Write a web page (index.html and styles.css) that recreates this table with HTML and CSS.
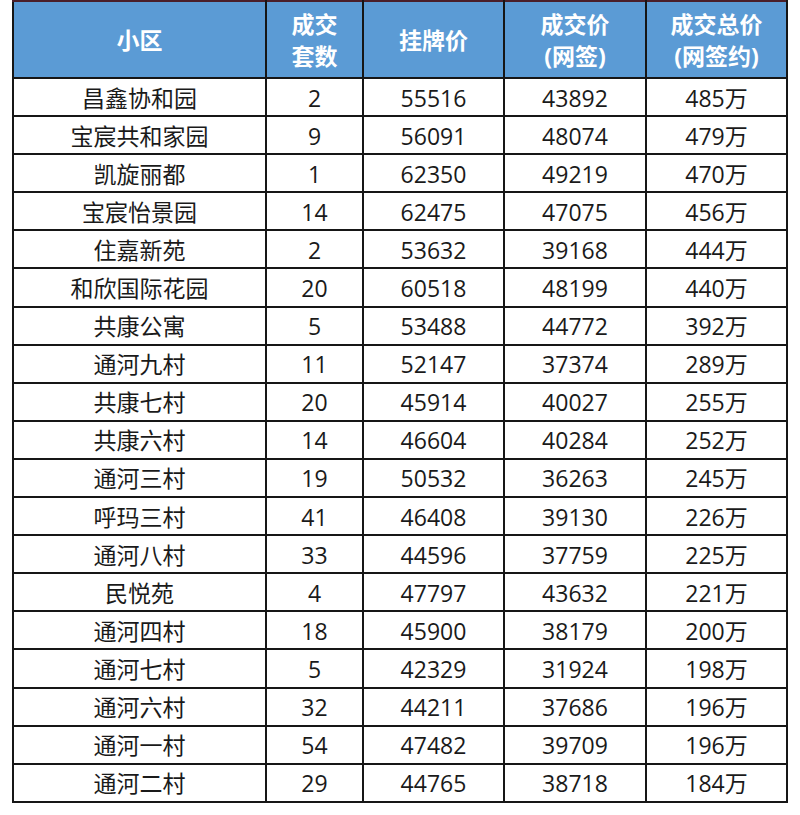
FILE: index.html
```html
<!DOCTYPE html>
<html lang="zh">
<head>
<meta charset="utf-8">
<link rel="stylesheet" href="styles.css">
</head>
<body>
<div class="wrap">
<table class="deals">
<colgroup>
<col class="c1"><col class="c2"><col class="c3"><col class="c4"><col class="c5">
</colgroup>
<thead>
<tr><th>小区</th><th>成交<br>套数</th><th>挂牌价</th><th>成交价<br>(网签)</th><th>成交总价<br>(网签约)</th></tr>
</thead>
<tbody>
<tr><td>昌鑫协和园</td><td>2</td><td>55516</td><td>43892</td><td>485万</td></tr>
<tr><td>宝宸共和家园</td><td>9</td><td>56091</td><td>48074</td><td>479万</td></tr>
<tr><td>凯旋丽都</td><td>1</td><td>62350</td><td>49219</td><td>470万</td></tr>
<tr><td>宝宸怡景园</td><td>14</td><td>62475</td><td>47075</td><td>456万</td></tr>
<tr><td>住嘉新苑</td><td>2</td><td>53632</td><td>39168</td><td>444万</td></tr>
<tr><td>和欣国际花园</td><td>20</td><td>60518</td><td>48199</td><td>440万</td></tr>
<tr><td>共康公寓</td><td>5</td><td>53488</td><td>44772</td><td>392万</td></tr>
<tr><td>通河九村</td><td>11</td><td>52147</td><td>37374</td><td>289万</td></tr>
<tr><td>共康七村</td><td>20</td><td>45914</td><td>40027</td><td>255万</td></tr>
<tr><td>共康六村</td><td>14</td><td>46604</td><td>40284</td><td>252万</td></tr>
<tr><td>通河三村</td><td>19</td><td>50532</td><td>36263</td><td>245万</td></tr>
<tr><td>呼玛三村</td><td>41</td><td>46408</td><td>39130</td><td>226万</td></tr>
<tr><td>通河八村</td><td>33</td><td>44596</td><td>37759</td><td>225万</td></tr>
<tr><td>民悦苑</td><td>4</td><td>47797</td><td>43632</td><td>221万</td></tr>
<tr><td>通河四村</td><td>18</td><td>45900</td><td>38179</td><td>200万</td></tr>
<tr><td>通河七村</td><td>5</td><td>42329</td><td>31924</td><td>198万</td></tr>
<tr><td>通河六村</td><td>32</td><td>44211</td><td>37686</td><td>196万</td></tr>
<tr><td>通河一村</td><td>54</td><td>47482</td><td>39709</td><td>196万</td></tr>
<tr><td>通河二村</td><td>29</td><td>44765</td><td>38718</td><td>184万</td></tr>
</tbody>
</table>
</div>
</body>
</html>
```
FILE: styles.css
```css
html, body {
  margin: 0;
  padding: 0;
  background: #ffffff;
}
.wrap {
  padding: 0 12px;
}
.deals {
  width: 776px;
  table-layout: fixed;
  border-collapse: collapse;
  font-family: "Open Sans", "Noto Sans CJK SC", sans-serif;
  color: #1a1a1a;
}
.c1 { width: 253px; }
.c2 { width: 97px; }
.c3 { width: 141px; }
.c4 { width: 142px; }
.c5 { width: 141px; }
.deals th, .deals td {
  border: 2px solid #161616;
  text-align: center;
  padding: 0;
}
.deals thead tr {
  height: 77px;
}
.deals thead th {
  background: #5b9bd5;
  color: #ffffff;
  font-weight: 700;
  font-size: 23px;
  line-height: 32px;
  border-top-color: #4a1f2a;
}
.deals tbody tr {
  height: 38.1px;
}
.deals tbody td {
  font-size: 23px;
  line-height: 28px;
  padding-top: 1px;
}
```
